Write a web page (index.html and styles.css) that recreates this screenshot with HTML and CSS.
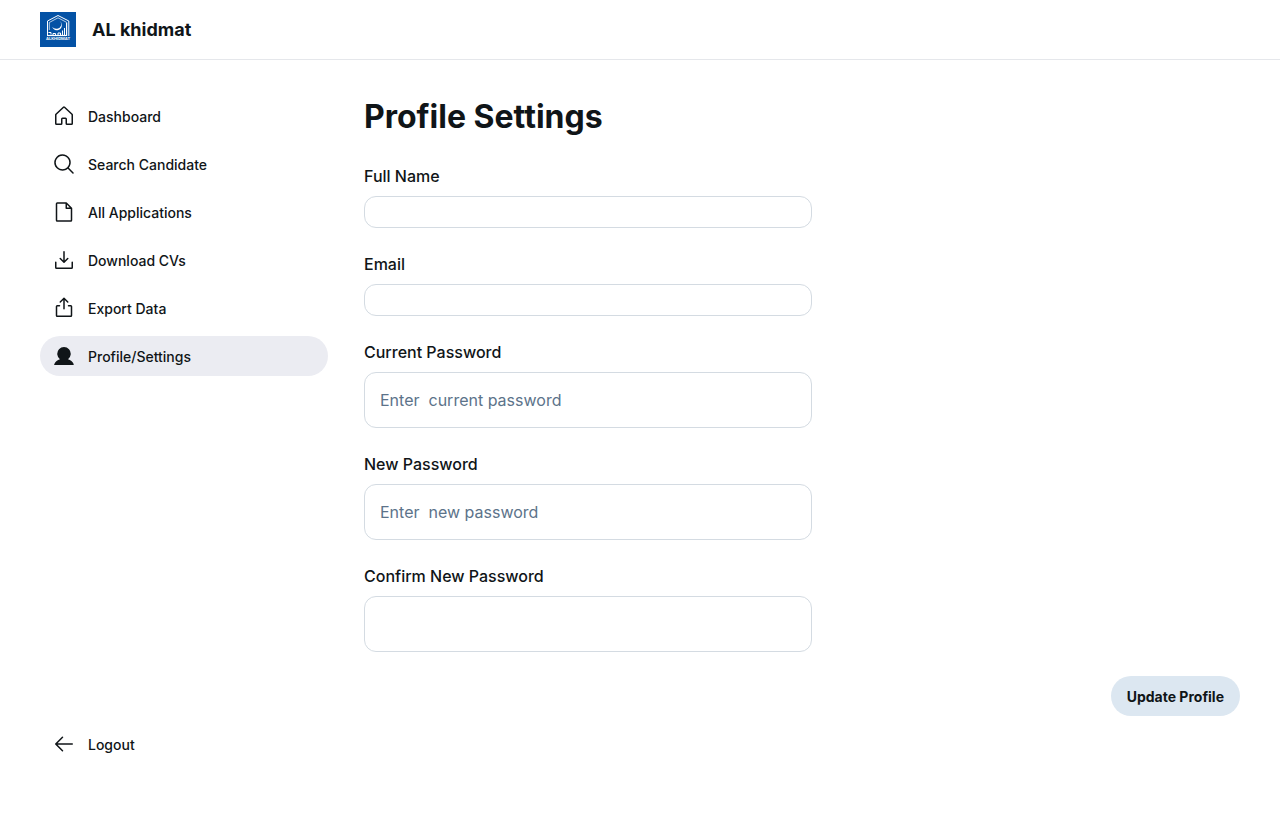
FILE: index.html
```html
<!DOCTYPE html>
<html lang="en">
<head>
<meta charset="utf-8">
<meta name="viewport" content="width=device-width, initial-scale=1">
<title>Profile Settings</title>
<link rel="stylesheet" href="styles.css">
</head>
<body>
<header class="topbar">
  <svg class="logo" viewBox="0 0 36 35" role="img" aria-label="Alkhidmat logo">
    <rect width="36" height="35" fill="#0452a5"/>
    <g fill="none" stroke="#fff">
      <path stroke-width="1" d="M7.500 24V9L18 3.500 28.800 9v15"/>
      <path stroke-width=".7" d="M9.300 18v-7.500L18 5.800l8.500 4.500"/>
      <path stroke-width="1.200" d="M26.600 10.500V24"/>
      <path stroke-width="1.200" d="M7 23.500h19"/>
      <path stroke-width="1" d="M8.500 20.500h2.500v2M13 23v-1.500h2.500V23M18 23v-2h2.500v2M22.500 23v-4.500M24.500 23v-7"/>
    </g>
    <path fill="#fff" d="M18.500 8.500a5 5 0 1 1-6.300 6.500a5.200 4.600 0 0 0 9-1.500a4.500 4.500 0 0 0-2.700-5z"/>
    <text class="logo-text" x="18" y="28" text-anchor="middle">ALKHIDMAT</text>
  </svg>
  <span class="brand">AL khidmat</span>
</header>
<div class="layout">
  <nav class="sidebar" aria-label="Main">
    <div class="nav-group">
      <a class="nav-item" href="#dashboard"><svg class="icon" viewBox="0 0 256 256" aria-hidden="true"><path d="M218.830,103.770l-80-75.480a1.140,1.140,0,0,1-.11-.11,16,16,0,0,0-21.530,0l-.11.11L37.170,103.770A16,16,0,0,0,32,115.550V208a16,16,0,0,0,16,16H96a16,16,0,0,0,16-16V160h32v48a16,16,0,0,0,16,16h48a16,16,0,0,0,16-16V115.550A16,16,0,0,0,218.830,103.770ZM208,208H160V160a16,16,0,0,0-16-16H112a16,16,0,0,0-16,16v48H48V115.550l.11-.1L128,40l79.900,75.430.1.110Z"/></svg>Dashboard</a>
      <a class="nav-item" href="#search"><svg class="icon" viewBox="0 0 256 256" aria-hidden="true"><path d="M229.660,218.340l-50.070-50.060a88.110,88.110,0,1,0-11.310,11.310l50.060,50.070a8,8,0,0,0,11.320-11.320ZM40,112a72,72,0,1,1,72,72A72.080,72.080,0,0,1,40,112Z"/></svg>Search Candidate</a>
      <a class="nav-item" href="#applications"><svg class="icon" viewBox="0 0 256 256" aria-hidden="true"><path d="M213.660,82.340l-56-56A8,8,0,0,0,152,24H56A16,16,0,0,0,40,40V216a16,16,0,0,0,16,16H200a16,16,0,0,0,16-16V88A8,8,0,0,0,213.660,82.340ZM160,51.310,188.690,80H160ZM200,216H56V40h88V88a8,8,0,0,0,8,8h48V216Z"/></svg>All Applications</a>
      <a class="nav-item" href="#download"><svg class="icon" viewBox="0 0 256 256" aria-hidden="true"><path d="M224,152v56a16,16,0,0,1-16,16H48a16,16,0,0,1-16-16V152a8,8,0,0,1,16,0v56H208V152a8,8,0,0,1,16,0Zm-101.660,5.660a8,8,0,0,0,11.320,0l40-40a8,8,0,0,0-11.320-11.320L136,132.690V40a8,8,0,0,0-16,0v92.690L93.660,106.340a8,8,0,0,0-11.320,11.320Z"/></svg>Download CVs</a>
      <a class="nav-item" href="#export"><svg class="icon" viewBox="0 0 256 256" aria-hidden="true"><path d="M216,112v96a16,16,0,0,1-16,16H56a16,16,0,0,1-16-16V112A16,16,0,0,1,56,96H80a8,8,0,0,1,0,16H56v96H200V112H176a8,8,0,0,1,0-16h24A16,16,0,0,1,216,112ZM93.660,69.660,120,43.310V136a8,8,0,0,0,16,0V43.310l26.340,26.350a8,8,0,0,0,11.320-11.320l-40-40a8,8,0,0,0-11.320,0l-40,40A8,8,0,0,0,93.660,69.660Z"/></svg>Export Data</a>
      <a class="nav-item active" href="#profile" aria-current="page"><svg class="icon" viewBox="0 0 256 256" aria-hidden="true"><path d="M230.930,220a8,8,0,0,1-6.930,4H32a8,8,0,0,1-6.920-12c13-24,31-42,60-49.500a72,72,0,1,1,85.840,0c29,7.500,47,25.500,60,49.500A8,8,0,0,1,230.930,220Z"/></svg>Profile/Settings</a>
    </div>
    <a class="nav-item" href="#logout"><svg class="icon" viewBox="0 0 256 256" aria-hidden="true"><path d="M224,128a8,8,0,0,1-8,8H59.310l58.350,58.340a8,8,0,0,1-11.320,11.320l-72-72a8,8,0,0,1,0-11.320l72-72a8,8,0,0,1,11.320,11.320L59.310,120H216A8,8,0,0,1,224,128Z"/></svg>Logout</a>
  </nav>
  <main class="content">
    <h1 class="title">Profile Settings</h1>
    <form class="form">
      <div class="field">
        <label class="label" for="name">Full Name</label>
        <input class="input short" id="name" type="text">
      </div>
      <div class="field">
        <label class="label" for="email">Email</label>
        <input class="input short" id="email" type="email">
      </div>
      <div class="field">
        <label class="label" for="current">Current Password</label>
        <input class="input" id="current" type="password" placeholder="Enter  current password">
      </div>
      <div class="field">
        <label class="label" for="new">New Password</label>
        <input class="input" id="new" type="password" placeholder="Enter  new password">
      </div>
      <div class="field">
        <label class="label" for="confirm">Confirm New Password</label>
        <input class="input" id="confirm" type="password">
      </div>
      <button class="submit" type="submit">Update Profile</button>
    </form>
  </main>
</div>
</body>
</html>
```
FILE: styles.css
```css
* {
  box-sizing: border-box;
}

body {
  margin: 0;
  min-height: 100vh;
  display: flex;
  flex-direction: column;
  background: #fff;
  color: #101518;
  font-family: Inter, "Noto Sans", sans-serif;
}

.topbar {
  display: flex;
  align-items: center;
  gap: 16px;
  padding: 12px 40px;
  border-bottom: 1px solid #e5e7eb;
}

.logo {
  display: block;
  width: 36px;
  height: 35px;
}

.logo-text {
  fill: #fff;
  font-family: Inter, sans-serif;
  font-size: 4px;
  font-weight: 700;
}

.brand {
  font-size: 18px;
  font-weight: 700;
  line-height: 23px;
}

.layout {
  flex: 1;
  display: flex;
  gap: 36px;
  padding: 36px 40px 53px;
}

.sidebar {
  flex: 0 0 288px;
  display: flex;
  flex-direction: column;
  justify-content: space-between;
}

.nav-group {
  display: flex;
  flex-direction: column;
  gap: 8px;
}

.nav-item {
  display: flex;
  align-items: center;
  gap: 12px;
  padding: 8px 12px;
  border-radius: 20px;
  color: inherit;
  font-size: 14px;
  font-weight: 500;
  line-height: 21px;
  text-decoration: none;
}

.nav-item.active {
  background: #ebecf2;
}

.icon {
  width: 24px;
  height: 24px;
  fill: currentColor;
}

.content {
  flex: 1;
  min-width: 0;
}

.title {
  margin: 0 0 26px;
  font-size: 32px;
  font-weight: 700;
  line-height: 42px;
}

.form {
  display: flex;
  flex-direction: column;
  gap: 24px;
}

.field {
  display: flex;
  flex-direction: column;
  gap: 8px;
  max-width: 448px;
}

.label {
  font-size: 16px;
  font-weight: 500;
  line-height: 24px;
}

.input {
  width: 100%;
  height: 56px;
  padding: 0 15px;
  border: 1px solid #d4dbe2;
  border-radius: 12px;
  background: #fff;
  color: inherit;
  font: 400 16px/24px Inter, "Noto Sans", sans-serif;
}

.input.short {
  height: 32px;
}

.input::placeholder {
  color: #5c738a;
  opacity: 1;
}

.submit {
  align-self: flex-end;
  height: 40px;
  padding: 0 16px;
  border: 0;
  border-radius: 20px;
  background: #dce7f1;
  color: inherit;
  font: 700 14px/21px Inter, "Noto Sans", sans-serif;
  cursor: pointer;
}
```
